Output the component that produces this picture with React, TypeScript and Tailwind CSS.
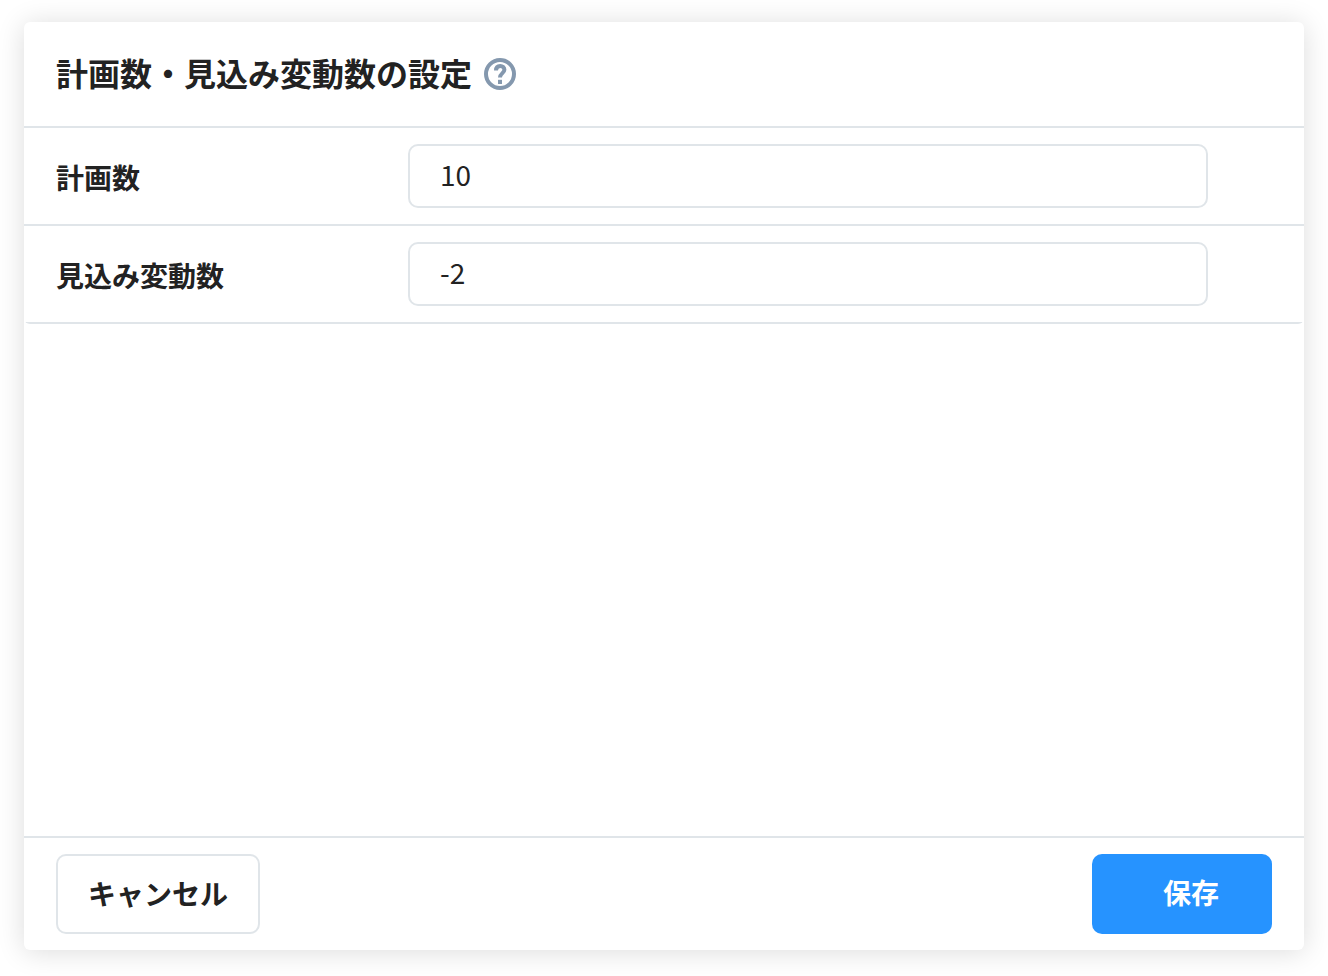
import React from "react";

type FieldProps = { id: string; label: string; value: string };

function Field({ id, label, value }: FieldProps) {
  return (
    <div className="flex items-center border-b-2 border-[#e0e5e9] py-4 pr-24 pl-8">
      <label htmlFor={id} className="w-[352px] shrink-0 pt-0.5 text-[28px] leading-10 font-bold">
        {label}
      </label>
      <input
        id={id}
        type="text"
        defaultValue={value}
        className="h-16 min-w-0 flex-1 rounded-[10px] border-2 border-[#e0e5e9] bg-white px-[30px] pb-1 text-[28px] outline-none"
      />
    </div>
  );
}

function HelpIcon() {
  return (
    <svg viewBox="0 0 32 32" className="size-8" fill="none" stroke="currentColor">
      <circle cx="16" cy="16" r="14" strokeWidth="4" />
      <path d="M12 12.4C12 9.6 13.6 7.9 16.2 7.9c2.5 0 4.2 1.5 4.2 3.9 0 3.3-4.4 3.5-4.4 7.8" strokeWidth="4" />
      <path d="M16 21.8v4.2" strokeWidth="4" />
    </svg>
  );
}

export default function App() {
  return (
    <div className="flex min-h-screen flex-col bg-white px-6 pt-[22px] pb-[26px] font-['Noto_Sans_CJK_JP',sans-serif] text-[#222222]">
      <form
        className="flex flex-1 flex-col rounded-md bg-white shadow-[0_2px_28px_rgba(0,0,0,0.14)]"
        onSubmit={(e) => e.preventDefault()}
      >
        <header className="flex items-center gap-3 border-b-2 border-[#e0e5e9] px-8 py-7">
          <h1 className="pb-1 text-[32px] leading-11 font-bold">計画数・見込み変動数の設定</h1>
          <button type="button" aria-label="ヘルプ" className="text-[#8498ae]">
            <HelpIcon />
          </button>
        </header>
        <div className="overflow-hidden rounded-b-md">
          <Field id="plan" label="計画数" value="10" />
          <Field id="change" label="見込み変動数" value="-2" />
        </div>
        <footer className="mt-auto flex items-center justify-between border-t-2 border-[#e0e5e9] px-8 py-4">
          <button
            type="button"
            className="h-20 rounded-[10px] border-2 border-[#e0e5e9] px-[30px] pb-0.5 text-[28px] font-bold"
          >
            キャンセル
          </button>
          <button
            type="submit"
            className="h-20 w-[180px] rounded-[10px] bg-[#2693ff] pb-1 pl-[18px] text-[28px] font-bold text-white"
          >
            保存
          </button>
        </footer>
      </form>
    </div>
  );
}
